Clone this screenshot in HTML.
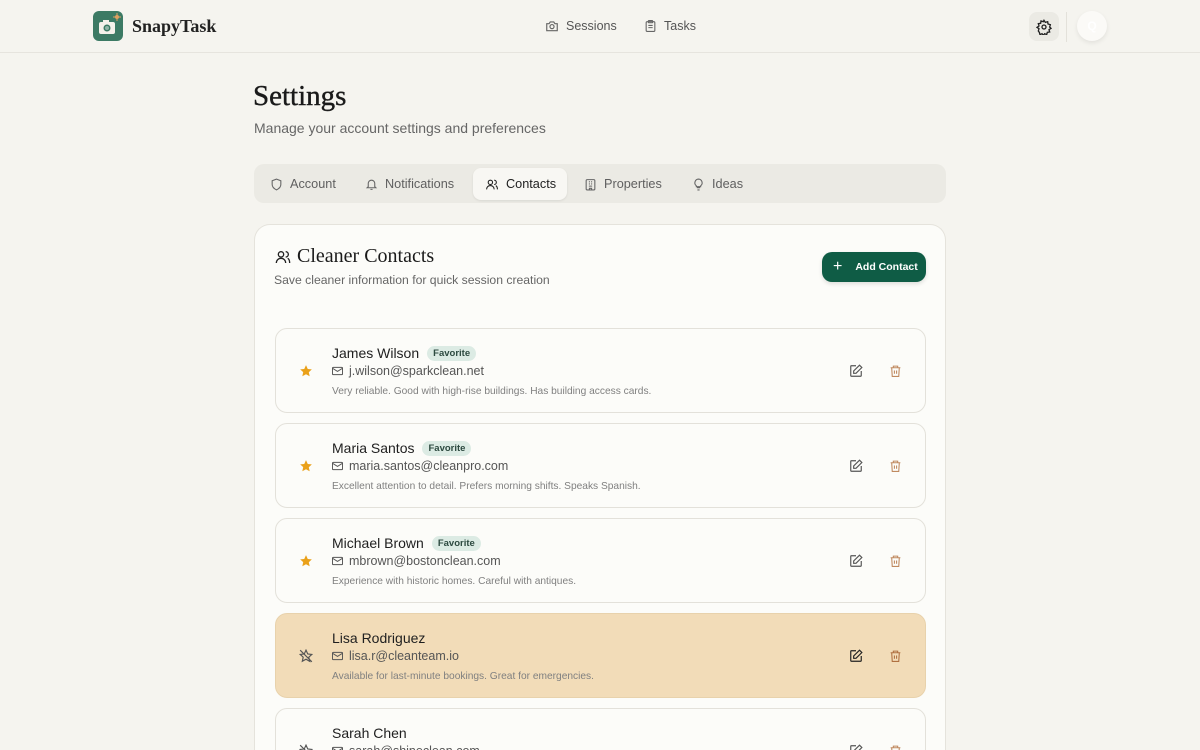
<!DOCTYPE html>
<html style="width:1200px;height:750px;overflow:hidden"><head><meta charset="utf-8"><style>
*{box-sizing:border-box;margin:0;padding:0}
body{width:1200px;height:750px;overflow:hidden;background:#f5f4ef;font-family:"Liberation Sans","DejaVu Sans",sans-serif;color:#1f1f1f;position:relative}
.abs{position:absolute}
.serif{font-family:"Liberation Serif","DejaVu Serif",serif}
svg{display:block}
.hdr{left:0;top:0;width:1200px;height:53px;border-bottom:1px solid #e6e4de}
.nav{font-size:12.5px;color:#555;display:flex;align-items:center;gap:6px}
.tabs{left:254px;top:164px;width:692px;height:39px;background:#ebeae4;border-radius:10px}
.tab{position:absolute;top:4px;height:32px;display:flex;align-items:center;gap:7px;font-size:12.7px;color:#5f5f5f}
.tab.on{background:#f8f7f3;border-radius:8px;color:#1f1f1f;box-shadow:0 1px 2px rgba(0,0,0,.08)}
.card{left:254px;top:224px;width:692px;height:526px;background:#fcfcf9;border:1px solid #e5e3dc;border-bottom:none;border-radius:16px 16px 0 0;overflow:hidden}
.row{position:absolute;left:20px;width:651px;height:85px;border:1px solid #e3e1da;border-radius:12px;background:#fcfcf9}
.row.hl{background:#f2dcb8;border-color:#e8d2ac}
.name{position:absolute;left:56px;top:16px;font-size:14px;color:#1f1f1f;display:flex;align-items:center;gap:8px}
.badge{font-size:9.5px;font-weight:bold;color:#2d4a40;background:#dcebe4;border-radius:8px;padding:2px 6px}
.email{position:absolute;left:56px;top:35px;font-size:12.5px;color:#555;display:flex;align-items:center;gap:6px}
.note{position:absolute;left:56px;top:57px;font-size:10.2px;color:#808080}
.star{position:absolute;left:23px;top:35px}
.ed{position:absolute;left:573px;top:35px}
.tr{position:absolute;left:613px;top:35px}
</style></head><body>
<div class="abs hdr"></div>
<div class="abs" style="left:93px;top:11px;width:30px;height:30px;background:#3c7a64;border-radius:6px">
<svg width="30" height="30" viewBox="0 0 30 30"><rect x="6" y="11" width="16" height="12" rx="2" fill="#f4f1ea"/><rect x="10" y="9" width="6" height="3" fill="#f4f1ea"/><circle cx="14" cy="17" r="3.5" fill="#3c7a64"/><circle cx="14" cy="17" r="2" fill="#8fb5a6"/><circle cx="24" cy="6" r="2" fill="#e0a060"/><path d="M24 2v8M20 6h8" stroke="#e0a060" stroke-width="1"/></svg></div>
<div class="abs serif" style="left:132px;top:16px;font-size:18px;font-weight:bold;color:#222">SnapyTask</div>
<div class="abs nav" style="left:545px;top:19px"><svg width="14" height="14" viewBox="0 0 24 24" fill="none" stroke="#666" stroke-width="2"><path d="M3 8h4l2-3h6l2 3h4v12H3z"/><circle cx="12" cy="13" r="3.5"/></svg><span style="margin-left:1px">Sessions</span></div>
<div class="abs nav" style="left:644px;top:19px"><svg width="13" height="14" viewBox="0 0 24 24" fill="none" stroke="#666" stroke-width="2"><rect x="4" y="4" width="16" height="18" rx="2"/><rect x="8" y="2" width="8" height="4" rx="1"/><path d="M8 11h8M8 15h8"/></svg><span style="margin-left:1px">Tasks</span></div>
<div class="abs" style="left:1029px;top:12px;width:30px;height:29px;background:#ebeae4;border-radius:8px"><svg style="margin:7px 0 0 7px" width="16" height="16" viewBox="0 0 24 24" fill="none" stroke="#222" stroke-width="2"><circle cx="12" cy="12" r="3"/><path d="M12 2l2 3 3.5-1 .5 3.5 3.5 1-1 3.5 2 2-3 2 1 3.5-3.5.5-1 3.5-3-1.5-2 2.5-2-2.5-3 1.5-1-3.5L3.5 18l1-3.5-3-2 3-2-1-3.5L7 6.5 7.5 3 11 4z"/></svg></div>
<div class="abs" style="left:1066px;top:12px;width:1px;height:30px;background:#e3e1da"></div>
<div class="abs" style="left:1077px;top:11px;width:30px;height:30px;border-radius:50%;background:#fbfaf7;box-shadow:0 2px 5px rgba(0,0,0,.08);color:#fff;font-size:12px;font-weight:bold;text-align:center;line-height:30px">Q</div>

<div class="abs serif" style="left:253px;top:80px;font-size:29px;color:#1a1a1a;-webkit-text-stroke:0.4px #1a1a1a">Settings</div>
<div class="abs" style="left:254px;top:120px;font-size:14px;color:#666">Manage your account settings and preferences</div>

<div class="abs tabs">
<div class="tab" style="left:16px"><svg width="13" height="13" viewBox="0 0 24 24" fill="none" stroke="#666" stroke-width="2"><path d="M12 2l8 3v7c0 5-4 8-8 10-4-2-8-5-8-10V5z"/></svg>Account</div>
<div class="tab" style="left:111px"><svg width="13" height="13" viewBox="0 0 24 24" fill="none" stroke="#666" stroke-width="2"><path d="M6 16V10a6 6 0 0112 0v6l2 2H4zM10 21h4"/></svg>Notifications</div>
<div class="tab on" style="left:219px;width:94px;padding-left:12px"><svg width="14" height="13" viewBox="0 0 24 24" fill="none" stroke="#222" stroke-width="2"><circle cx="9" cy="8" r="4"/><path d="M2 21c0-4 3-7 7-7s7 3 7 7M16 4a4 4 0 010 8M19 14c2 1 3 4 3 7"/></svg>Contacts</div>
<div class="tab" style="left:330px"><svg width="13" height="13" viewBox="0 0 24 24" fill="none" stroke="#666" stroke-width="2"><rect x="4" y="3" width="16" height="19" rx="2"/><path d="M9 7h2M13 7h2M9 11h2M13 11h2M9 15h6M10 22v-3h4v3"/></svg>Properties</div>
<div class="tab" style="left:438px"><svg width="13" height="13" viewBox="0 0 24 24" fill="none" stroke="#666" stroke-width="2"><path d="M9 18h6M10 22h4M12 2a7 7 0 00-4 12.5V16h8v-1.5A7 7 0 0012 2z"/></svg>Ideas</div>
</div>

<div class="abs card">
<svg class="abs" style="left:20px;top:24px" width="16" height="16" viewBox="0 0 24 24" fill="none" stroke="#222" stroke-width="2"><circle cx="9" cy="8" r="4"/><path d="M2 21c0-4 3-7 7-7s7 3 7 7M16 4a4 4 0 010 8M19 14c2 1 3 4 3 7"/></svg>
<div class="abs serif" style="left:42px;top:20px;font-size:20px;color:#1a1a1a">Cleaner Contacts</div>
<div class="abs" style="left:19px;top:48px;font-size:12.2px;color:#666">Save cleaner information for quick session creation</div>
<div class="abs" style="left:567px;top:27px;width:104px;height:30px;background:#0f5c45;border-radius:10px;color:#fff;font-size:10.5px;font-weight:bold;display:flex;align-items:center;box-shadow:0 2px 4px rgba(0,0,0,.12)"><span style="font-size:16px;font-weight:normal;margin:0 13px 0 11px">+</span>Add Contact</div>

<div class="row" style="top:103px">
<svg class="star" width="14" height="14" viewBox="0 0 24 24"><path d="M12 2l3 6.5 7 .8-5.2 4.8 1.5 7L12 17.5 5.7 21l1.5-7L2 9.3l7-.8z" fill="#eaa11a"/></svg>
<div class="name">James Wilson <span class="badge">Favorite</span></div>
<div class="email"><svg width="11" height="10" viewBox="0 0 24 20" fill="none" stroke="#555" stroke-width="2.2"><rect x="1" y="2" width="22" height="16" rx="2"/><path d="M1 4l11 7 11-7"/></svg>j.wilson@sparkclean.net</div>
<div class="note">Very reliable. Good with high-rise buildings. Has building access cards.</div>
<svg class="ed" width="14" height="14" viewBox="0 0 24 24" fill="none" stroke="#555" stroke-width="2"><path d="M12 3H4a1 1 0 00-1 1v16a1 1 0 001 1h16a1 1 0 001-1v-8"/><path d="M18 2l4 4-10 10H8v-4z"/></svg>
<svg class="tr" width="13" height="14" viewBox="0 0 24 24" fill="none" stroke="#c08a60" stroke-width="2"><path d="M3 6h18M8 6V3h8v3M5 6l1 16h12l1-16M10 11v6M14 11v6"/></svg>
</div>
<div class="row" style="top:198px">
<svg class="star" width="14" height="14" viewBox="0 0 24 24"><path d="M12 2l3 6.5 7 .8-5.2 4.8 1.5 7L12 17.5 5.7 21l1.5-7L2 9.3l7-.8z" fill="#eaa11a"/></svg>
<div class="name">Maria Santos <span class="badge">Favorite</span></div>
<div class="email"><svg width="11" height="10" viewBox="0 0 24 20" fill="none" stroke="#555" stroke-width="2.2"><rect x="1" y="2" width="22" height="16" rx="2"/><path d="M1 4l11 7 11-7"/></svg>maria.santos@cleanpro.com</div>
<div class="note">Excellent attention to detail. Prefers morning shifts. Speaks Spanish.</div>
<svg class="ed" width="14" height="14" viewBox="0 0 24 24" fill="none" stroke="#555" stroke-width="2"><path d="M12 3H4a1 1 0 00-1 1v16a1 1 0 001 1h16a1 1 0 001-1v-8"/><path d="M18 2l4 4-10 10H8v-4z"/></svg>
<svg class="tr" width="13" height="14" viewBox="0 0 24 24" fill="none" stroke="#c08a60" stroke-width="2"><path d="M3 6h18M8 6V3h8v3M5 6l1 16h12l1-16M10 11v6M14 11v6"/></svg>
</div>
<div class="row" style="top:293px">
<svg class="star" width="14" height="14" viewBox="0 0 24 24"><path d="M12 2l3 6.5 7 .8-5.2 4.8 1.5 7L12 17.5 5.7 21l1.5-7L2 9.3l7-.8z" fill="#eaa11a"/></svg>
<div class="name">Michael Brown <span class="badge">Favorite</span></div>
<div class="email"><svg width="11" height="10" viewBox="0 0 24 20" fill="none" stroke="#555" stroke-width="2.2"><rect x="1" y="2" width="22" height="16" rx="2"/><path d="M1 4l11 7 11-7"/></svg>mbrown@bostonclean.com</div>
<div class="note">Experience with historic homes. Careful with antiques.</div>
<svg class="ed" width="14" height="14" viewBox="0 0 24 24" fill="none" stroke="#555" stroke-width="2"><path d="M12 3H4a1 1 0 00-1 1v16a1 1 0 001 1h16a1 1 0 001-1v-8"/><path d="M18 2l4 4-10 10H8v-4z"/></svg>
<svg class="tr" width="13" height="14" viewBox="0 0 24 24" fill="none" stroke="#c08a60" stroke-width="2"><path d="M3 6h18M8 6V3h8v3M5 6l1 16h12l1-16M10 11v6M14 11v6"/></svg>
</div>
<div class="row hl" style="top:388px">
<svg class="star" width="14" height="14" viewBox="0 0 24 24" fill="none" stroke="#555" stroke-width="2"><path d="M12 2l3 6.5 7 .8-5.2 4.8 1.5 7L12 17.5 5.7 21l1.5-7L2 9.3l7-.8zM2 2l20 20"/></svg>
<div class="name">Lisa Rodriguez</div>
<div class="email"><svg width="11" height="10" viewBox="0 0 24 20" fill="none" stroke="#555" stroke-width="2.2"><rect x="1" y="2" width="22" height="16" rx="2"/><path d="M1 4l11 7 11-7"/></svg>lisa.r@cleanteam.io</div>
<div class="note">Available for last-minute bookings. Great for emergencies.</div>
<svg class="ed" width="14" height="14" viewBox="0 0 24 24" fill="none" stroke="#222" stroke-width="2"><path d="M12 3H4a1 1 0 00-1 1v16a1 1 0 001 1h16a1 1 0 001-1v-8"/><path d="M18 2l4 4-10 10H8v-4z"/></svg>
<svg class="tr" width="13" height="14" viewBox="0 0 24 24" fill="none" stroke="#b07040" stroke-width="2"><path d="M3 6h18M8 6V3h8v3M5 6l1 16h12l1-16M10 11v6M14 11v6"/></svg>
</div>
<div class="row" style="top:483px">
<svg class="star" width="14" height="14" viewBox="0 0 24 24" fill="none" stroke="#555" stroke-width="2"><path d="M12 2l3 6.5 7 .8-5.2 4.8 1.5 7L12 17.5 5.7 21l1.5-7L2 9.3l7-.8zM2 2l20 20"/></svg>
<div class="name">Sarah Chen</div>
<div class="email"><svg width="11" height="10" viewBox="0 0 24 20" fill="none" stroke="#555" stroke-width="2.2"><rect x="1" y="2" width="22" height="16" rx="2"/><path d="M1 4l11 7 11-7"/></svg>sarah@shineclean.com</div>
<svg class="ed" width="14" height="14" viewBox="0 0 24 24" fill="none" stroke="#555" stroke-width="2"><path d="M12 3H4a1 1 0 00-1 1v16a1 1 0 001 1h16a1 1 0 001-1v-8"/><path d="M18 2l4 4-10 10H8v-4z"/></svg>
<svg class="tr" width="13" height="14" viewBox="0 0 24 24" fill="none" stroke="#c08a60" stroke-width="2"><path d="M3 6h18M8 6V3h8v3M5 6l1 16h12l1-16M10 11v6M14 11v6"/></svg>
</div>
</div>
</body></html>
